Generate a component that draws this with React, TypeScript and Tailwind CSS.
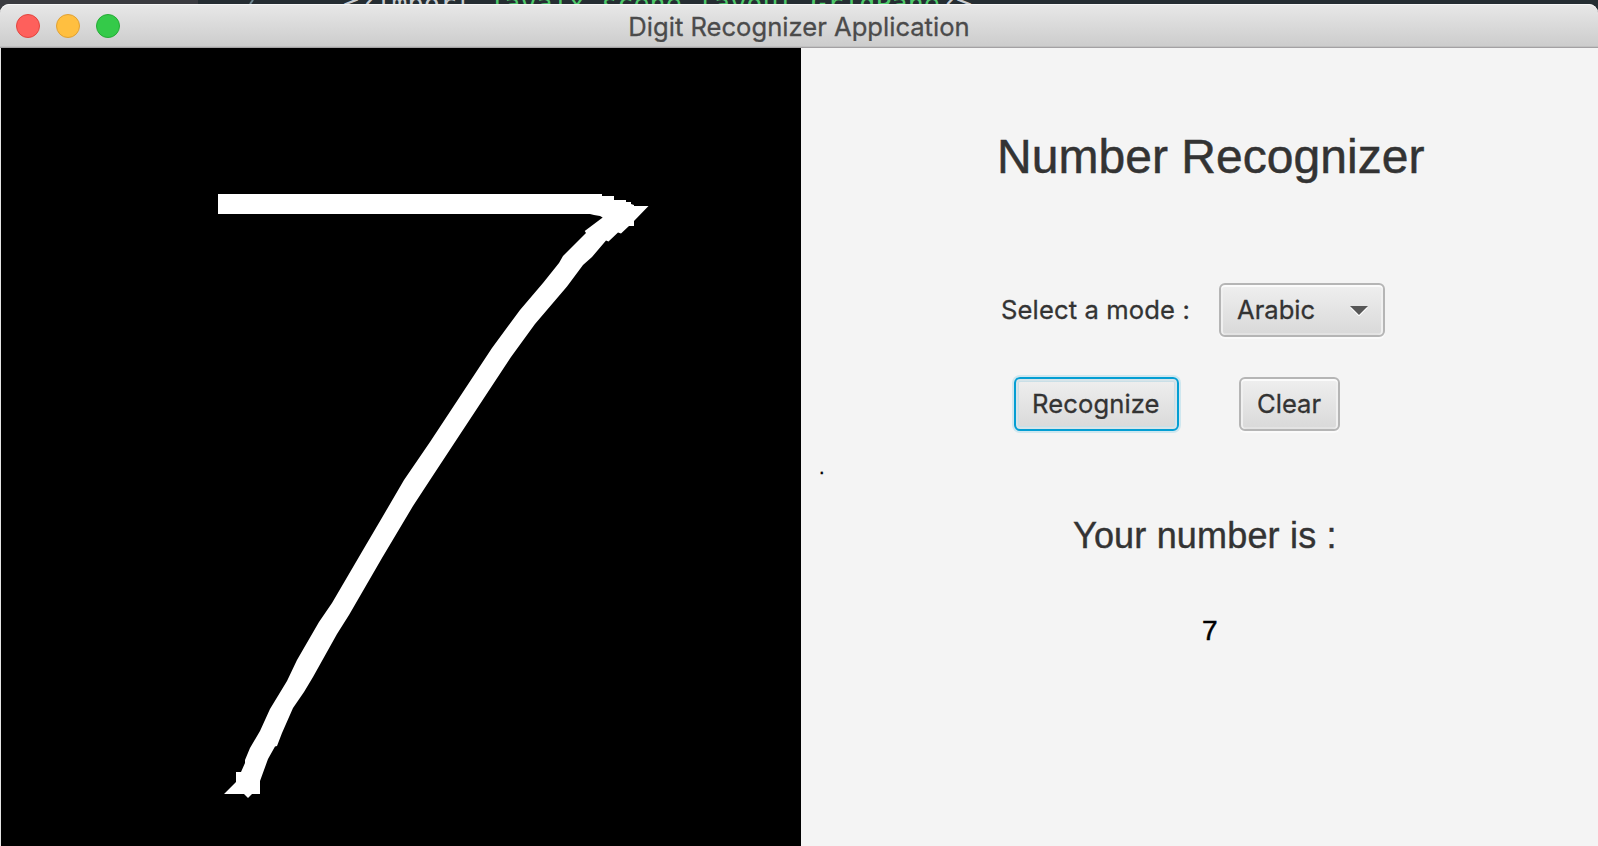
const strokePoints =
  "218,194 602,194 602,196 614,196 614,200 626,200 626,202 631,202 631,204 634,205 634,206 648.5,206 634,221 634,226 629,226 621,233.5 618,232.5 608.5,241.5 606,240.5 592,257 583,265 567,286.5 535,324 511,357 455,442 430,480 413,506 382,558 349,615 337,634 313,677 304,692 293,708 282,733 277,746 275,746.5 268,759 260,781 260,794 252,794 248,798 244,794 224,794 236,782 236,772 241,772 245,763 245,760 250,748 260,731 270,709 287,681 297,660 319,622 332,603 363,550 383,516 404,480 430,442 492,348 520,310 543,283 559,263 563,256 586,233 584.7,231 602.7,217.5 600,216 594,215 590,214 218,214";

function TitleBar() {
  return (
    <header className="relative flex h-11 shrink-0 items-center justify-center rounded-t-[9px] border-b border-[#a3a1a3] bg-linear-to-b from-[#e8e8e8] to-[#cccccc] shadow-[inset_0_1px_0_#f6f6f6,inset_0_-1px_0_#c0c0c0]">
      <div className="absolute top-2.5 left-4 flex gap-4">
        <span className="size-6 rounded-full border border-[#e2463f] bg-[#fe605c]" />
        <span className="size-6 rounded-full border border-[#e0a135] bg-[#ffbf40]" />
        <span className="size-6 rounded-full border border-[#25ab35] bg-[#34ca49]" />
      </div>
      <h1 className="pt-0.5 text-[25.6px] leading-8 text-[#4b4b4b] [-webkit-text-stroke:0.3px]">
        Digit Recognizer Application
      </h1>
    </header>
  );
}

function DrawingCanvas() {
  return (
    <section className="w-[801px] border-l border-[#e4e4e4] bg-black">
      <svg className="block" width="800" height="798" viewBox="1 48 800 798">
        <polygon points={strokePoints} fill="#fff" />
      </svg>
    </section>
  );
}

const control =
  "flex h-[54px] items-center rounded-md border-2 border-[#b5b5b5] bg-linear-to-b from-[#efefef] to-[#d9d9d9] text-[25.6px] text-[#333333] shadow-[inset_0_2px_0_#fbfbfb,inset_2px_0_0_#f0f0f0,inset_-2px_0_0_#f0f0f0,inset_0_-2px_0_#e3e3e3,0_2px_0_#fafafa]";

const focused =
  "flex h-[54px] items-center rounded-md border-2 border-[#039ed3] bg-linear-to-b from-[#efefef] to-[#d9d9d9] text-[25.6px] text-[#333333] shadow-[0_0_0_2px_#cfe7ef,inset_0_0_0_2px_#d7e4e9,inset_0_0_0_3px_#c9dfe7]";

function Controls() {
  return (
    <section className="flex flex-1 flex-col bg-[#f4f4f4] text-[#333333] [-webkit-text-stroke:0.3px]">
      <h2 className="mt-[81px] ml-[196px] font-['Liberation_Sans',Arial,sans-serif] text-[48px] leading-[56px] tracking-[0.04px] [-webkit-text-stroke:0.5px]">
        Number Recognizer
      </h2>
      <div className="mt-[98px] flex items-center">
        <span className="ml-[200px] w-[218px] text-[25.6px] tracking-[0.12px] whitespace-nowrap">
          Select a mode :
        </span>
        <button className={control + " w-[166px] justify-between pr-[15px] pl-4"}>
          Arabic
          <svg className="mt-px" width="18" height="10" viewBox="0 0 18 10">
            <path d="M0 1.5h18L9 10.5z" fill="#fff" />
            <path d="M0 0h18L9 9z" fill="#575757" />
          </svg>
        </button>
      </div>
      <div className="mt-10 flex">
        <button className={focused + " ml-[213px] w-[165px] pl-4 tracking-[0.1px]"}>Recognize</button>
        <button className={control + " ml-[60px] w-[101px] pl-4"}>Clear</button>
      </div>
      <p className="mt-[21px] ml-[18px] h-[30px] font-['Liberation_Sans',Arial,sans-serif] text-[20px] leading-[30px] text-black">
        .
      </p>
      <p className="mt-[33px] ml-[272px] font-['Liberation_Sans',Arial,sans-serif] text-[36px] leading-[42px] tracking-[0.18px] [-webkit-text-stroke:0.4px]">
        Your number is :
      </p>
      <p className="mt-[58px] ml-[401px] font-['Liberation_Sans',Arial,sans-serif] text-[28px] leading-[32px] text-black [-webkit-text-stroke:0.5px]">
        7
      </p>
    </section>
  );
}

export default function App() {
  return (
    <div className="relative flex h-[846px] w-[1598px] flex-col overflow-hidden bg-[#252d32] font-['Inter','Roboto',sans-serif]">
      <div className="flex h-1 shrink-0 overflow-visible">
        <div className="h-4 w-[198px] bg-[#3a3b40]" />
        <svg className="ml-[49px]" width="10" height="4" viewBox="0 0 10 4">
          <path d="M3 4 L6 0" stroke="#6f8791" strokeWidth="2" />
        </svg>
        <pre className="mt-[-12px] ml-[86px] h-8 font-['DejaVu_Sans_Mono',monospace] text-[26.8px] leading-8 text-[#c8ccd0]">
          {"<?import "}
          <span className="text-[#4fc96b]">javafx.scene.layout.GridPane</span>
          {"?>"}
        </pre>
      </div>
      <TitleBar />
      <main className="flex h-[798px]">
        <DrawingCanvas />
        <Controls />
      </main>
    </div>
  );
}
